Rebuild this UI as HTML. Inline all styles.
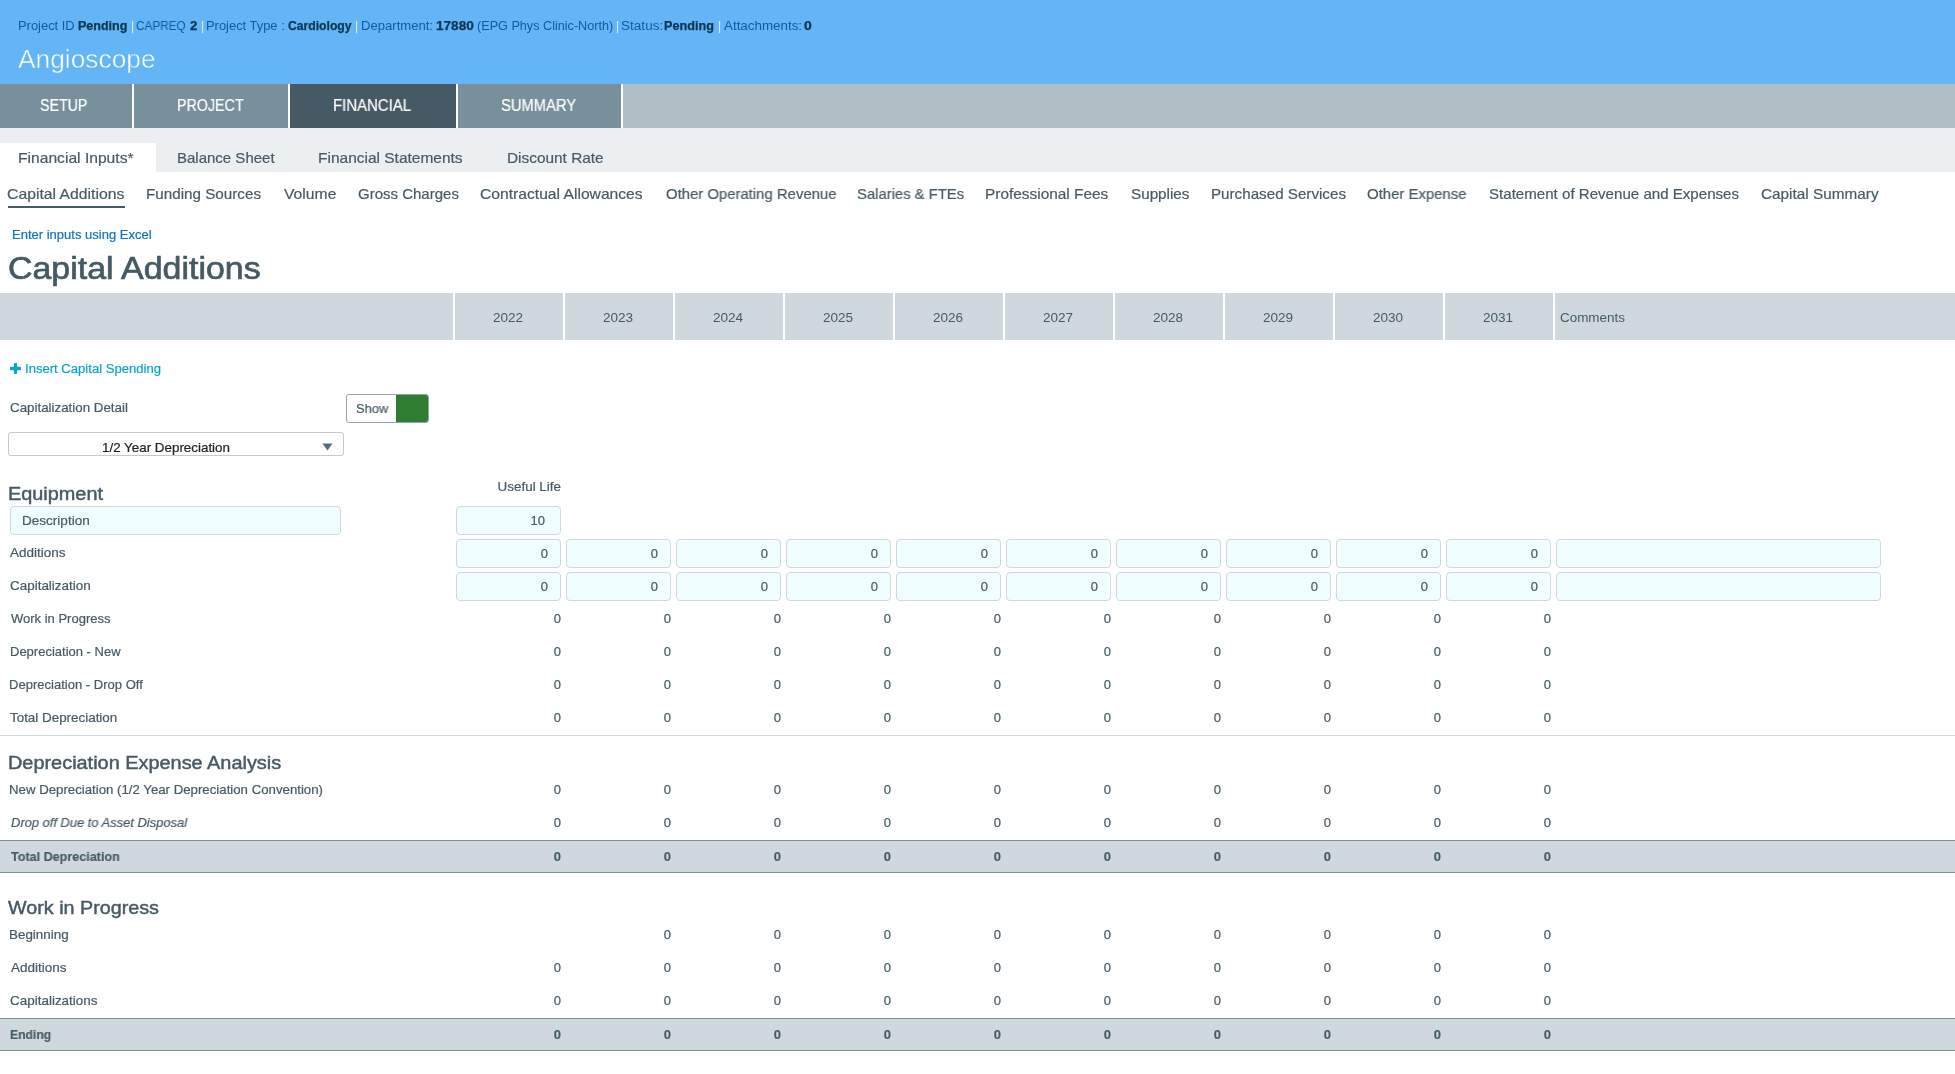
<!DOCTYPE html>
<html><head><meta charset="utf-8"><style>
html,body{margin:0;padding:0;background:#fff;width:1955px;height:1074px;overflow:hidden;position:relative}
body{font-family:"Liberation Sans",sans-serif}
.a{position:absolute}
.t{position:absolute;white-space:nowrap;will-change:transform;-webkit-text-stroke:0.2px currentColor}
.n{color:#0D5CA6}
.p{color:#E3F2FD}
b{color:#0B3654}
</style></head><body>
<div class="a" style="left:0px;top:0px;width:1955px;height:84px;background:#64B5F6"></div>
<div class="t" id="inf0" style="left:18.22px;top:19.54px;font-size:12px;line-height:12px;transform:scaleX(1.0758);transform-origin:0 0;color:#0D5CA6;-webkit-text-stroke:0;">Project ID</div>
<div class="t" id="inf1" style="left:78.15px;top:19.54px;font-size:12px;line-height:12px;transform:scaleX(1.0433);transform-origin:0 0;color:#0B3654;font-weight:bold;-webkit-text-stroke:0.25px currentColor;">Pending</div>
<div class="t" id="inf2" style="left:130.50px;top:19.54px;font-size:12px;line-height:12px;transform-origin:0 0;color:#E3F2FD;-webkit-text-stroke:0;">|</div>
<div class="t" id="inf3" style="left:136.00px;top:19.54px;font-size:12px;line-height:12px;transform:scaleX(0.9802);transform-origin:0 0;color:#0D5CA6;-webkit-text-stroke:0;">CAPREQ</div>
<div class="t" id="inf4" style="left:190.19px;top:19.54px;font-size:12px;line-height:12px;transform:scaleX(1.1024);transform-origin:0 0;color:#0B3654;font-weight:bold;-webkit-text-stroke:0.25px currentColor;">2</div>
<div class="t" id="inf5" style="left:200.80px;top:19.54px;font-size:12px;line-height:12px;transform-origin:0 0;color:#E3F2FD;-webkit-text-stroke:0;">|</div>
<div class="t" id="inf6" style="left:206.36px;top:19.54px;font-size:12px;line-height:12px;transform:scaleX(1.0762);transform-origin:0 0;color:#0D5CA6;-webkit-text-stroke:0;">Project Type :</div>
<div class="t" id="inf7" style="left:287.80px;top:19.54px;font-size:12px;line-height:12px;transform:scaleX(1.0145);transform-origin:0 0;color:#0B3654;font-weight:bold;-webkit-text-stroke:0.25px currentColor;">Cardiology</div>
<div class="t" id="inf8" style="left:355.00px;top:19.54px;font-size:12px;line-height:12px;transform-origin:0 0;color:#E3F2FD;-webkit-text-stroke:0;">|</div>
<div class="t" id="inf9" style="left:360.90px;top:19.54px;font-size:12px;line-height:12px;transform:scaleX(1.0903);transform-origin:0 0;color:#0D5CA6;-webkit-text-stroke:0;">Department:</div>
<div class="t" id="inf10" style="left:435.95px;top:19.54px;font-size:12px;line-height:12px;transform:scaleX(1.1329);transform-origin:0 0;color:#0B3654;font-weight:bold;-webkit-text-stroke:0.25px currentColor;">17880</div>
<div class="t" id="inf11" style="left:476.57px;top:19.54px;font-size:12px;line-height:12px;transform:scaleX(1.0531);transform-origin:0 0;color:#0D5CA6;-webkit-text-stroke:0;">(EPG Phys Clinic-North)</div>
<div class="t" id="inf12" style="left:616.10px;top:19.54px;font-size:12px;line-height:12px;transform-origin:0 0;color:#E3F2FD;-webkit-text-stroke:0;">|</div>
<div class="t" id="inf13" style="left:620.67px;top:19.54px;font-size:12px;line-height:12px;transform:scaleX(1.1304);transform-origin:0 0;color:#0D5CA6;-webkit-text-stroke:0;">Status:</div>
<div class="t" id="inf14" style="left:664.42px;top:19.54px;font-size:12px;line-height:12px;transform:scaleX(1.0532);transform-origin:0 0;color:#0B3654;font-weight:bold;-webkit-text-stroke:0.25px currentColor;">Pending</div>
<div class="t" id="inf15" style="left:717.70px;top:19.54px;font-size:12px;line-height:12px;transform-origin:0 0;color:#E3F2FD;-webkit-text-stroke:0;">|</div>
<div class="t" id="inf16" style="left:723.65px;top:19.54px;font-size:12px;line-height:12px;transform:scaleX(1.1151);transform-origin:0 0;color:#0D5CA6;-webkit-text-stroke:0;">Attachments:</div>
<div class="t" id="inf17" style="left:803.95px;top:19.54px;font-size:12px;line-height:12px;transform:scaleX(1.1584);transform-origin:0 0;color:#0B3654;font-weight:bold;-webkit-text-stroke:0.25px currentColor;">0</div>
<div class="t" id="angio" style="left:17.95px;top:46.64px;font-size:25px;line-height:25px;transform:scaleX(1.0534);transform-origin:0 0;color:#fff;-webkit-text-stroke:0.45px #64B5F6">Angioscope</div>
<div class="a" style="left:0px;top:84px;width:132px;height:44px;background:#78909C"></div>
<div class="a" style="left:134px;top:84px;width:154px;height:44px;background:#78909C"></div>
<div class="a" style="left:290px;top:84px;width:166px;height:44px;background:#455A64"></div>
<div class="a" style="left:458px;top:84px;width:163px;height:44px;background:#78909C"></div>
<div class="a" style="left:623px;top:84px;width:1332px;height:44px;background:#B0BEC5"></div>
<div class="t" id="t_setup" style="left:40.21px;top:98.21px;font-size:15.7px;line-height:15.7px;transform:scaleX(0.9073);transform-origin:0 0;color:#fff">SETUP</div>
<div class="t" id="t_proj" style="left:177.39px;top:98.21px;font-size:15.7px;line-height:15.7px;transform:scaleX(0.9104);transform-origin:0 0;color:#fff">PROJECT</div>
<div class="t" id="t_fin" style="left:333.48px;top:98.21px;font-size:15.7px;line-height:15.7px;transform:scaleX(0.9525);transform-origin:0 0;color:#fff">FINANCIAL</div>
<div class="t" id="t_sum" style="left:501.06px;top:98.21px;font-size:15.7px;line-height:15.7px;transform:scaleX(0.9393);transform-origin:0 0;color:#fff">SUMMARY</div>
<div class="a" style="left:0px;top:128px;width:1955px;height:44px;background:#ECEFF1"></div>
<div class="a" style="left:0px;top:143px;width:156px;height:29px;background:#fff"></div>
<div class="t" id="s_fi" style="left:18.01px;top:150.20px;font-size:15px;line-height:15px;transform:scaleX(1.0418);transform-origin:0 0;color:#455A64">Financial Inputs*</div>
<div class="t" id="s_bs" style="left:177.03px;top:150.20px;font-size:15px;line-height:15px;transform:scaleX(0.9983);transform-origin:0 0;color:#455A64">Balance Sheet</div>
<div class="t" id="s_fs" style="left:318.48px;top:150.20px;font-size:15px;line-height:15px;transform:scaleX(1.0324);transform-origin:0 0;color:#455A64">Financial Statements</div>
<div class="t" id="s_dr" style="left:507.06px;top:150.20px;font-size:15px;line-height:15px;transform:scaleX(1.0256);transform-origin:0 0;color:#455A64">Discount Rate</div>
<div class="t" id="n0" style="left:7.31px;top:185.90px;font-size:15px;line-height:15px;transform:scaleX(1.0502);transform-origin:0 0;color:#455A64">Capital Additions</div>
<div class="t" id="n1" style="left:145.99px;top:185.90px;font-size:15px;line-height:15px;transform:scaleX(1.0143);transform-origin:0 0;color:#455A64">Funding Sources</div>
<div class="t" id="n2" style="left:283.60px;top:185.90px;font-size:15px;line-height:15px;transform:scaleX(1.0473);transform-origin:0 0;color:#455A64">Volume</div>
<div class="t" id="n3" style="left:358.20px;top:185.90px;font-size:15px;line-height:15px;transform:scaleX(1.0004);transform-origin:0 0;color:#455A64">Gross Charges</div>
<div class="t" id="n4" style="left:480.07px;top:185.90px;font-size:15px;line-height:15px;transform:scaleX(1.0431);transform-origin:0 0;color:#455A64">Contractual Allowances</div>
<div class="t" id="n5" style="left:665.90px;top:185.90px;font-size:15px;line-height:15px;transform:scaleX(0.9923);transform-origin:0 0;color:#455A64">Other Operating Revenue</div>
<div class="t" id="n6" style="left:857.38px;top:185.90px;font-size:15px;line-height:15px;transform:scaleX(0.9890);transform-origin:0 0;color:#455A64">Salaries &amp; FTEs</div>
<div class="t" id="n7" style="left:985.13px;top:185.90px;font-size:15px;line-height:15px;transform:scaleX(1.0272);transform-origin:0 0;color:#455A64">Professional Fees</div>
<div class="t" id="n8" style="left:1130.76px;top:185.90px;font-size:15px;line-height:15px;transform:scaleX(1.0159);transform-origin:0 0;color:#455A64">Supplies</div>
<div class="t" id="n9" style="left:1210.68px;top:185.90px;font-size:15px;line-height:15px;transform:scaleX(1.0120);transform-origin:0 0;color:#455A64">Purchased Services</div>
<div class="t" id="n10" style="left:1367.46px;top:185.90px;font-size:15px;line-height:15px;transform:scaleX(0.9941);transform-origin:0 0;color:#455A64">Other Expense</div>
<div class="t" id="n11" style="left:1488.94px;top:185.90px;font-size:15px;line-height:15px;transform:scaleX(1.0062);transform-origin:0 0;color:#455A64">Statement of Revenue and Expenses</div>
<div class="t" id="n12" style="left:1760.57px;top:185.90px;font-size:15px;line-height:15px;transform:scaleX(1.0218);transform-origin:0 0;color:#455A64">Capital Summary</div>
<div class="a" style="left:8px;top:206px;width:117px;height:2px;background:#455A64"></div>
<div class="t" id="excel" style="left:12.07px;top:227.90px;font-size:13px;line-height:13px;transform:scaleX(1.0011);transform-origin:0 0;color:#0B74BF">Enter inputs using Excel</div>
<div class="t" id="h1" style="left:8.45px;top:251.91px;font-size:32px;line-height:32px;transform:scaleX(1.0598);transform-origin:0 0;color:#455A64;-webkit-text-stroke:0.7px #455A64">Capital Additions</div>
<div class="a" style="left:0px;top:293px;width:453px;height:47px;background:#CFD8DC"></div>
<div class="a" style="left:455px;top:293px;width:108px;height:47px;background:#CFD8DC"></div>
<div class="t" id="y0" style="left:208.22px;width:600px;text-align:center;top:311.10px;font-size:13px;line-height:13px;transform:scaleX(1.0433);transform-origin:50% 0;color:#455A64;-webkit-text-stroke:0">2022</div>
<div class="a" style="left:565px;top:293px;width:108px;height:47px;background:#CFD8DC"></div>
<div class="t" id="y1" style="left:318.22px;width:600px;text-align:center;top:311.10px;font-size:13px;line-height:13px;transform:scaleX(1.0433);transform-origin:50% 0;color:#455A64;-webkit-text-stroke:0">2023</div>
<div class="a" style="left:675px;top:293px;width:108px;height:47px;background:#CFD8DC"></div>
<div class="t" id="y2" style="left:428.22px;width:600px;text-align:center;top:311.10px;font-size:13px;line-height:13px;transform:scaleX(1.0433);transform-origin:50% 0;color:#455A64;-webkit-text-stroke:0">2024</div>
<div class="a" style="left:785px;top:293px;width:108px;height:47px;background:#CFD8DC"></div>
<div class="t" id="y3" style="left:538.22px;width:600px;text-align:center;top:311.10px;font-size:13px;line-height:13px;transform:scaleX(1.0433);transform-origin:50% 0;color:#455A64;-webkit-text-stroke:0">2025</div>
<div class="a" style="left:895px;top:293px;width:108px;height:47px;background:#CFD8DC"></div>
<div class="t" id="y4" style="left:648.22px;width:600px;text-align:center;top:311.10px;font-size:13px;line-height:13px;transform:scaleX(1.0433);transform-origin:50% 0;color:#455A64;-webkit-text-stroke:0">2026</div>
<div class="a" style="left:1005px;top:293px;width:108px;height:47px;background:#CFD8DC"></div>
<div class="t" id="y5" style="left:758.22px;width:600px;text-align:center;top:311.10px;font-size:13px;line-height:13px;transform:scaleX(1.0433);transform-origin:50% 0;color:#455A64;-webkit-text-stroke:0">2027</div>
<div class="a" style="left:1115px;top:293px;width:108px;height:47px;background:#CFD8DC"></div>
<div class="t" id="y6" style="left:868.22px;width:600px;text-align:center;top:311.10px;font-size:13px;line-height:13px;transform:scaleX(1.0433);transform-origin:50% 0;color:#455A64;-webkit-text-stroke:0">2028</div>
<div class="a" style="left:1225px;top:293px;width:108px;height:47px;background:#CFD8DC"></div>
<div class="t" id="y7" style="left:978.22px;width:600px;text-align:center;top:311.10px;font-size:13px;line-height:13px;transform:scaleX(1.0433);transform-origin:50% 0;color:#455A64;-webkit-text-stroke:0">2029</div>
<div class="a" style="left:1335px;top:293px;width:108px;height:47px;background:#CFD8DC"></div>
<div class="t" id="y8" style="left:1088.22px;width:600px;text-align:center;top:311.10px;font-size:13px;line-height:13px;transform:scaleX(1.0433);transform-origin:50% 0;color:#455A64;-webkit-text-stroke:0">2030</div>
<div class="a" style="left:1445px;top:293px;width:108px;height:47px;background:#CFD8DC"></div>
<div class="t" id="y9" style="left:1198.22px;width:600px;text-align:center;top:311.10px;font-size:13px;line-height:13px;transform:scaleX(1.0433);transform-origin:50% 0;color:#455A64;-webkit-text-stroke:0">2031</div>
<div class="a" style="left:1555px;top:293px;width:400px;height:47px;background:#CFD8DC"></div>
<div class="t" id="comments" style="left:1560.07px;top:311.10px;font-size:13px;line-height:13px;transform:scaleX(1.0338);transform-origin:0 0;color:#455A64;-webkit-text-stroke:0">Comments</div>
<svg class="a" style="left:9.9px;top:363.3px" width="11" height="11" viewBox="0 0 11 11"><rect x="0" y="3.7" width="11" height="3.5" rx="0.9" fill="#0AA5C8"/><rect x="3.95" y="0" width="3.1" height="11" rx="0.9" fill="#0AA5C8"/></svg>
<div class="t" id="insert" style="left:25.44px;top:361.80px;font-size:13px;line-height:13px;transform:scaleX(1.0062);transform-origin:0 0;color:#0AA5C8">Insert Capital Spending</div>
<div class="t" id="capdet" style="left:10.16px;top:400.80px;font-size:13px;line-height:13px;transform:scaleX(1.0259);transform-origin:0 0;color:#455A64">Capitalization Detail</div>
<div class="a" style="left:346px;top:394px;width:83px;height:29px;border:1px solid #90A4AE;border-radius:3px;box-sizing:border-box;background:#fff"></div>
<div class="a" style="left:396px;top:395px;width:32px;height:27px;background:#2E7D32;border-radius:0 2px 2px 0"></div>
<div class="t" id="show" style="left:356.05px;top:401.90px;font-size:13px;line-height:13px;transform:scaleX(0.9860);transform-origin:0 0;color:#455A64">Show</div>
<div class="a" style="left:8px;top:432px;width:336px;height:24px;border:1px solid #C8C8C8;border-radius:3px;box-sizing:border-box;background:#fff"></div>
<div class="t" id="sel" style="left:101.81px;top:441.00px;font-size:13px;line-height:13px;transform:scaleX(1.0295);transform-origin:0 0;color:#222">1/2 Year Depreciation</div>
<svg class="a" style="left:322px;top:443px" width="11" height="8" viewBox="0 0 11 8"><path d="M0.5 0.5h10L5.5 7.5z" fill="#546E7A"/></svg>
<div class="t" id="equip" style="left:7.55px;top:484.66px;font-size:18px;line-height:18px;transform:scaleX(1.1039);transform-origin:0 0;color:#455A64;-webkit-text-stroke:0.45px #455A64">Equipment</div>
<div class="t" id="useful" style="left:260.89px;width:300px;text-align:right;top:479.90px;font-size:13px;line-height:13px;transform:scaleX(1.0320);transform-origin:100% 0;color:#455A64">Useful Life</div>
<div class="a" style="left:10px;top:506px;width:331px;height:29px;border:1px solid #CFD8DC;border-radius:4px;box-sizing:border-box;background:#F1FEFF"></div>
<div class="t" id="desc" style="left:22.29px;top:514.00px;font-size:13px;line-height:13px;transform:scaleX(1.0412);transform-origin:0 0;color:#455A64">Description</div>
<div class="a" style="left:456px;top:506px;width:105px;height:29px;border:1px solid #CFD8DC;border-radius:4px;box-sizing:border-box;background:#F1FEFF"></div>
<div class="t" id="ul10" style="left:244.70px;width:300px;text-align:right;top:514.00px;font-size:13px;line-height:13px;transform-origin:100% 0;color:#455A64">10</div>
<div class="t" id="lab_e0" style="left:10.24px;top:546.00px;font-size:13px;line-height:13px;transform:scaleX(1.0377);transform-origin:0 0;color:#455A64">Additions</div>
<div class="a" style="left:456px;top:539px;width:105px;height:29px;border:1px solid #CFD8DC;border-radius:4px;box-sizing:border-box;background:#F1FEFF"></div>
<div class="t" id="in0_0" style="left:248.00px;width:300px;text-align:right;top:547.00px;font-size:13px;line-height:13px;transform-origin:100% 0;color:#455A64">0</div>
<div class="a" style="left:566px;top:539px;width:105px;height:29px;border:1px solid #CFD8DC;border-radius:4px;box-sizing:border-box;background:#F1FEFF"></div>
<div class="t" id="in0_1" style="left:358.00px;width:300px;text-align:right;top:547.00px;font-size:13px;line-height:13px;transform-origin:100% 0;color:#455A64">0</div>
<div class="a" style="left:676px;top:539px;width:105px;height:29px;border:1px solid #CFD8DC;border-radius:4px;box-sizing:border-box;background:#F1FEFF"></div>
<div class="t" id="in0_2" style="left:468.00px;width:300px;text-align:right;top:547.00px;font-size:13px;line-height:13px;transform-origin:100% 0;color:#455A64">0</div>
<div class="a" style="left:786px;top:539px;width:105px;height:29px;border:1px solid #CFD8DC;border-radius:4px;box-sizing:border-box;background:#F1FEFF"></div>
<div class="t" id="in0_3" style="left:578.00px;width:300px;text-align:right;top:547.00px;font-size:13px;line-height:13px;transform-origin:100% 0;color:#455A64">0</div>
<div class="a" style="left:896px;top:539px;width:105px;height:29px;border:1px solid #CFD8DC;border-radius:4px;box-sizing:border-box;background:#F1FEFF"></div>
<div class="t" id="in0_4" style="left:688.00px;width:300px;text-align:right;top:547.00px;font-size:13px;line-height:13px;transform-origin:100% 0;color:#455A64">0</div>
<div class="a" style="left:1006px;top:539px;width:105px;height:29px;border:1px solid #CFD8DC;border-radius:4px;box-sizing:border-box;background:#F1FEFF"></div>
<div class="t" id="in0_5" style="left:798.00px;width:300px;text-align:right;top:547.00px;font-size:13px;line-height:13px;transform-origin:100% 0;color:#455A64">0</div>
<div class="a" style="left:1116px;top:539px;width:105px;height:29px;border:1px solid #CFD8DC;border-radius:4px;box-sizing:border-box;background:#F1FEFF"></div>
<div class="t" id="in0_6" style="left:908.00px;width:300px;text-align:right;top:547.00px;font-size:13px;line-height:13px;transform-origin:100% 0;color:#455A64">0</div>
<div class="a" style="left:1226px;top:539px;width:105px;height:29px;border:1px solid #CFD8DC;border-radius:4px;box-sizing:border-box;background:#F1FEFF"></div>
<div class="t" id="in0_7" style="left:1018.00px;width:300px;text-align:right;top:547.00px;font-size:13px;line-height:13px;transform-origin:100% 0;color:#455A64">0</div>
<div class="a" style="left:1336px;top:539px;width:105px;height:29px;border:1px solid #CFD8DC;border-radius:4px;box-sizing:border-box;background:#F1FEFF"></div>
<div class="t" id="in0_8" style="left:1128.00px;width:300px;text-align:right;top:547.00px;font-size:13px;line-height:13px;transform-origin:100% 0;color:#455A64">0</div>
<div class="a" style="left:1446px;top:539px;width:105px;height:29px;border:1px solid #CFD8DC;border-radius:4px;box-sizing:border-box;background:#F1FEFF"></div>
<div class="t" id="in0_9" style="left:1238.00px;width:300px;text-align:right;top:547.00px;font-size:13px;line-height:13px;transform-origin:100% 0;color:#455A64">0</div>
<div class="a" style="left:1556px;top:539px;width:325px;height:29px;border:1px solid #CFD8DC;border-radius:4px;box-sizing:border-box;background:#F1FEFF"></div>
<div class="t" id="lab_e1" style="left:9.87px;top:578.80px;font-size:13px;line-height:13px;transform:scaleX(1.0340);transform-origin:0 0;color:#455A64">Capitalization</div>
<div class="a" style="left:456px;top:572px;width:105px;height:29px;border:1px solid #CFD8DC;border-radius:4px;box-sizing:border-box;background:#F1FEFF"></div>
<div class="t" id="in1_0" style="left:248.00px;width:300px;text-align:right;top:580.00px;font-size:13px;line-height:13px;transform-origin:100% 0;color:#455A64">0</div>
<div class="a" style="left:566px;top:572px;width:105px;height:29px;border:1px solid #CFD8DC;border-radius:4px;box-sizing:border-box;background:#F1FEFF"></div>
<div class="t" id="in1_1" style="left:358.00px;width:300px;text-align:right;top:580.00px;font-size:13px;line-height:13px;transform-origin:100% 0;color:#455A64">0</div>
<div class="a" style="left:676px;top:572px;width:105px;height:29px;border:1px solid #CFD8DC;border-radius:4px;box-sizing:border-box;background:#F1FEFF"></div>
<div class="t" id="in1_2" style="left:468.00px;width:300px;text-align:right;top:580.00px;font-size:13px;line-height:13px;transform-origin:100% 0;color:#455A64">0</div>
<div class="a" style="left:786px;top:572px;width:105px;height:29px;border:1px solid #CFD8DC;border-radius:4px;box-sizing:border-box;background:#F1FEFF"></div>
<div class="t" id="in1_3" style="left:578.00px;width:300px;text-align:right;top:580.00px;font-size:13px;line-height:13px;transform-origin:100% 0;color:#455A64">0</div>
<div class="a" style="left:896px;top:572px;width:105px;height:29px;border:1px solid #CFD8DC;border-radius:4px;box-sizing:border-box;background:#F1FEFF"></div>
<div class="t" id="in1_4" style="left:688.00px;width:300px;text-align:right;top:580.00px;font-size:13px;line-height:13px;transform-origin:100% 0;color:#455A64">0</div>
<div class="a" style="left:1006px;top:572px;width:105px;height:29px;border:1px solid #CFD8DC;border-radius:4px;box-sizing:border-box;background:#F1FEFF"></div>
<div class="t" id="in1_5" style="left:798.00px;width:300px;text-align:right;top:580.00px;font-size:13px;line-height:13px;transform-origin:100% 0;color:#455A64">0</div>
<div class="a" style="left:1116px;top:572px;width:105px;height:29px;border:1px solid #CFD8DC;border-radius:4px;box-sizing:border-box;background:#F1FEFF"></div>
<div class="t" id="in1_6" style="left:908.00px;width:300px;text-align:right;top:580.00px;font-size:13px;line-height:13px;transform-origin:100% 0;color:#455A64">0</div>
<div class="a" style="left:1226px;top:572px;width:105px;height:29px;border:1px solid #CFD8DC;border-radius:4px;box-sizing:border-box;background:#F1FEFF"></div>
<div class="t" id="in1_7" style="left:1018.00px;width:300px;text-align:right;top:580.00px;font-size:13px;line-height:13px;transform-origin:100% 0;color:#455A64">0</div>
<div class="a" style="left:1336px;top:572px;width:105px;height:29px;border:1px solid #CFD8DC;border-radius:4px;box-sizing:border-box;background:#F1FEFF"></div>
<div class="t" id="in1_8" style="left:1128.00px;width:300px;text-align:right;top:580.00px;font-size:13px;line-height:13px;transform-origin:100% 0;color:#455A64">0</div>
<div class="a" style="left:1446px;top:572px;width:105px;height:29px;border:1px solid #CFD8DC;border-radius:4px;box-sizing:border-box;background:#F1FEFF"></div>
<div class="t" id="in1_9" style="left:1238.00px;width:300px;text-align:right;top:580.00px;font-size:13px;line-height:13px;transform-origin:100% 0;color:#455A64">0</div>
<div class="a" style="left:1556px;top:572px;width:325px;height:29px;border:1px solid #CFD8DC;border-radius:4px;box-sizing:border-box;background:#F1FEFF"></div>
<div class="t" id="wip" style="left:10.60px;top:612.20px;font-size:13px;line-height:13px;transform-origin:0 0;color:#455A64;">Work in Progress</div>
<div class="t" id="wip_v0" style="left:261.00px;width:300px;text-align:right;top:612.20px;font-size:13px;line-height:13px;transform-origin:100% 0;color:#455A64;">0</div>
<div class="t" id="wip_v1" style="left:371.00px;width:300px;text-align:right;top:612.20px;font-size:13px;line-height:13px;transform-origin:100% 0;color:#455A64;">0</div>
<div class="t" id="wip_v2" style="left:481.00px;width:300px;text-align:right;top:612.20px;font-size:13px;line-height:13px;transform-origin:100% 0;color:#455A64;">0</div>
<div class="t" id="wip_v3" style="left:591.00px;width:300px;text-align:right;top:612.20px;font-size:13px;line-height:13px;transform-origin:100% 0;color:#455A64;">0</div>
<div class="t" id="wip_v4" style="left:701.00px;width:300px;text-align:right;top:612.20px;font-size:13px;line-height:13px;transform-origin:100% 0;color:#455A64;">0</div>
<div class="t" id="wip_v5" style="left:811.00px;width:300px;text-align:right;top:612.20px;font-size:13px;line-height:13px;transform-origin:100% 0;color:#455A64;">0</div>
<div class="t" id="wip_v6" style="left:921.00px;width:300px;text-align:right;top:612.20px;font-size:13px;line-height:13px;transform-origin:100% 0;color:#455A64;">0</div>
<div class="t" id="wip_v7" style="left:1031.00px;width:300px;text-align:right;top:612.20px;font-size:13px;line-height:13px;transform-origin:100% 0;color:#455A64;">0</div>
<div class="t" id="wip_v8" style="left:1141.00px;width:300px;text-align:right;top:612.20px;font-size:13px;line-height:13px;transform-origin:100% 0;color:#455A64;">0</div>
<div class="t" id="wip_v9" style="left:1251.00px;width:300px;text-align:right;top:612.20px;font-size:13px;line-height:13px;transform-origin:100% 0;color:#455A64;">0</div>
<div class="t" id="dn" style="left:9.94px;top:645.20px;font-size:13px;line-height:13px;transform:scaleX(0.9992);transform-origin:0 0;color:#455A64;">Depreciation - New</div>
<div class="t" id="dn_v0" style="left:261.00px;width:300px;text-align:right;top:645.20px;font-size:13px;line-height:13px;transform-origin:100% 0;color:#455A64;">0</div>
<div class="t" id="dn_v1" style="left:371.00px;width:300px;text-align:right;top:645.20px;font-size:13px;line-height:13px;transform-origin:100% 0;color:#455A64;">0</div>
<div class="t" id="dn_v2" style="left:481.00px;width:300px;text-align:right;top:645.20px;font-size:13px;line-height:13px;transform-origin:100% 0;color:#455A64;">0</div>
<div class="t" id="dn_v3" style="left:591.00px;width:300px;text-align:right;top:645.20px;font-size:13px;line-height:13px;transform-origin:100% 0;color:#455A64;">0</div>
<div class="t" id="dn_v4" style="left:701.00px;width:300px;text-align:right;top:645.20px;font-size:13px;line-height:13px;transform-origin:100% 0;color:#455A64;">0</div>
<div class="t" id="dn_v5" style="left:811.00px;width:300px;text-align:right;top:645.20px;font-size:13px;line-height:13px;transform-origin:100% 0;color:#455A64;">0</div>
<div class="t" id="dn_v6" style="left:921.00px;width:300px;text-align:right;top:645.20px;font-size:13px;line-height:13px;transform-origin:100% 0;color:#455A64;">0</div>
<div class="t" id="dn_v7" style="left:1031.00px;width:300px;text-align:right;top:645.20px;font-size:13px;line-height:13px;transform-origin:100% 0;color:#455A64;">0</div>
<div class="t" id="dn_v8" style="left:1141.00px;width:300px;text-align:right;top:645.20px;font-size:13px;line-height:13px;transform-origin:100% 0;color:#455A64;">0</div>
<div class="t" id="dn_v9" style="left:1251.00px;width:300px;text-align:right;top:645.20px;font-size:13px;line-height:13px;transform-origin:100% 0;color:#455A64;">0</div>
<div class="t" id="dd" style="left:9.17px;top:678.20px;font-size:13px;line-height:13px;transform:scaleX(1.0028);transform-origin:0 0;color:#455A64;">Depreciation - Drop Off</div>
<div class="t" id="dd_v0" style="left:261.00px;width:300px;text-align:right;top:678.20px;font-size:13px;line-height:13px;transform-origin:100% 0;color:#455A64;">0</div>
<div class="t" id="dd_v1" style="left:371.00px;width:300px;text-align:right;top:678.20px;font-size:13px;line-height:13px;transform-origin:100% 0;color:#455A64;">0</div>
<div class="t" id="dd_v2" style="left:481.00px;width:300px;text-align:right;top:678.20px;font-size:13px;line-height:13px;transform-origin:100% 0;color:#455A64;">0</div>
<div class="t" id="dd_v3" style="left:591.00px;width:300px;text-align:right;top:678.20px;font-size:13px;line-height:13px;transform-origin:100% 0;color:#455A64;">0</div>
<div class="t" id="dd_v4" style="left:701.00px;width:300px;text-align:right;top:678.20px;font-size:13px;line-height:13px;transform-origin:100% 0;color:#455A64;">0</div>
<div class="t" id="dd_v5" style="left:811.00px;width:300px;text-align:right;top:678.20px;font-size:13px;line-height:13px;transform-origin:100% 0;color:#455A64;">0</div>
<div class="t" id="dd_v6" style="left:921.00px;width:300px;text-align:right;top:678.20px;font-size:13px;line-height:13px;transform-origin:100% 0;color:#455A64;">0</div>
<div class="t" id="dd_v7" style="left:1031.00px;width:300px;text-align:right;top:678.20px;font-size:13px;line-height:13px;transform-origin:100% 0;color:#455A64;">0</div>
<div class="t" id="dd_v8" style="left:1141.00px;width:300px;text-align:right;top:678.20px;font-size:13px;line-height:13px;transform-origin:100% 0;color:#455A64;">0</div>
<div class="t" id="dd_v9" style="left:1251.00px;width:300px;text-align:right;top:678.20px;font-size:13px;line-height:13px;transform-origin:100% 0;color:#455A64;">0</div>
<div class="t" id="td" style="left:10.29px;top:711.20px;font-size:13px;line-height:13px;transform:scaleX(1.0305);transform-origin:0 0;color:#455A64;">Total Depreciation</div>
<div class="t" id="td_v0" style="left:261.00px;width:300px;text-align:right;top:711.20px;font-size:13px;line-height:13px;transform-origin:100% 0;color:#455A64;">0</div>
<div class="t" id="td_v1" style="left:371.00px;width:300px;text-align:right;top:711.20px;font-size:13px;line-height:13px;transform-origin:100% 0;color:#455A64;">0</div>
<div class="t" id="td_v2" style="left:481.00px;width:300px;text-align:right;top:711.20px;font-size:13px;line-height:13px;transform-origin:100% 0;color:#455A64;">0</div>
<div class="t" id="td_v3" style="left:591.00px;width:300px;text-align:right;top:711.20px;font-size:13px;line-height:13px;transform-origin:100% 0;color:#455A64;">0</div>
<div class="t" id="td_v4" style="left:701.00px;width:300px;text-align:right;top:711.20px;font-size:13px;line-height:13px;transform-origin:100% 0;color:#455A64;">0</div>
<div class="t" id="td_v5" style="left:811.00px;width:300px;text-align:right;top:711.20px;font-size:13px;line-height:13px;transform-origin:100% 0;color:#455A64;">0</div>
<div class="t" id="td_v6" style="left:921.00px;width:300px;text-align:right;top:711.20px;font-size:13px;line-height:13px;transform-origin:100% 0;color:#455A64;">0</div>
<div class="t" id="td_v7" style="left:1031.00px;width:300px;text-align:right;top:711.20px;font-size:13px;line-height:13px;transform-origin:100% 0;color:#455A64;">0</div>
<div class="t" id="td_v8" style="left:1141.00px;width:300px;text-align:right;top:711.20px;font-size:13px;line-height:13px;transform-origin:100% 0;color:#455A64;">0</div>
<div class="t" id="td_v9" style="left:1251.00px;width:300px;text-align:right;top:711.20px;font-size:13px;line-height:13px;transform-origin:100% 0;color:#455A64;">0</div>
<div class="a" style="left:0px;top:735px;width:1955px;height:1px;background:#CFD8DC"></div>
<div class="t" id="dea" style="left:7.89px;top:753.56px;font-size:18px;line-height:18px;transform:scaleX(1.1053);transform-origin:0 0;color:#455A64;-webkit-text-stroke:0.45px #455A64">Depreciation Expense Analysis</div>
<div class="t" id="nd" style="left:9.48px;top:783.00px;font-size:13px;line-height:13px;transform:scaleX(1.0175);transform-origin:0 0;color:#455A64;">New Depreciation (1/2 Year Depreciation Convention)</div>
<div class="t" id="nd_v0" style="left:261.00px;width:300px;text-align:right;top:783.00px;font-size:13px;line-height:13px;transform-origin:100% 0;color:#455A64;">0</div>
<div class="t" id="nd_v1" style="left:371.00px;width:300px;text-align:right;top:783.00px;font-size:13px;line-height:13px;transform-origin:100% 0;color:#455A64;">0</div>
<div class="t" id="nd_v2" style="left:481.00px;width:300px;text-align:right;top:783.00px;font-size:13px;line-height:13px;transform-origin:100% 0;color:#455A64;">0</div>
<div class="t" id="nd_v3" style="left:591.00px;width:300px;text-align:right;top:783.00px;font-size:13px;line-height:13px;transform-origin:100% 0;color:#455A64;">0</div>
<div class="t" id="nd_v4" style="left:701.00px;width:300px;text-align:right;top:783.00px;font-size:13px;line-height:13px;transform-origin:100% 0;color:#455A64;">0</div>
<div class="t" id="nd_v5" style="left:811.00px;width:300px;text-align:right;top:783.00px;font-size:13px;line-height:13px;transform-origin:100% 0;color:#455A64;">0</div>
<div class="t" id="nd_v6" style="left:921.00px;width:300px;text-align:right;top:783.00px;font-size:13px;line-height:13px;transform-origin:100% 0;color:#455A64;">0</div>
<div class="t" id="nd_v7" style="left:1031.00px;width:300px;text-align:right;top:783.00px;font-size:13px;line-height:13px;transform-origin:100% 0;color:#455A64;">0</div>
<div class="t" id="nd_v8" style="left:1141.00px;width:300px;text-align:right;top:783.00px;font-size:13px;line-height:13px;transform-origin:100% 0;color:#455A64;">0</div>
<div class="t" id="nd_v9" style="left:1251.00px;width:300px;text-align:right;top:783.00px;font-size:13px;line-height:13px;transform-origin:100% 0;color:#455A64;">0</div>
<div class="t" id="do" style="left:10.96px;top:815.80px;font-size:13px;line-height:13px;transform:scaleX(0.9924);transform-origin:0 0;color:#455A64;font-style:italic;">Drop off Due to Asset Disposal</div>
<div class="t" id="do_v0" style="left:261.00px;width:300px;text-align:right;top:815.80px;font-size:13px;line-height:13px;transform-origin:100% 0;color:#455A64;">0</div>
<div class="t" id="do_v1" style="left:371.00px;width:300px;text-align:right;top:815.80px;font-size:13px;line-height:13px;transform-origin:100% 0;color:#455A64;">0</div>
<div class="t" id="do_v2" style="left:481.00px;width:300px;text-align:right;top:815.80px;font-size:13px;line-height:13px;transform-origin:100% 0;color:#455A64;">0</div>
<div class="t" id="do_v3" style="left:591.00px;width:300px;text-align:right;top:815.80px;font-size:13px;line-height:13px;transform-origin:100% 0;color:#455A64;">0</div>
<div class="t" id="do_v4" style="left:701.00px;width:300px;text-align:right;top:815.80px;font-size:13px;line-height:13px;transform-origin:100% 0;color:#455A64;">0</div>
<div class="t" id="do_v5" style="left:811.00px;width:300px;text-align:right;top:815.80px;font-size:13px;line-height:13px;transform-origin:100% 0;color:#455A64;">0</div>
<div class="t" id="do_v6" style="left:921.00px;width:300px;text-align:right;top:815.80px;font-size:13px;line-height:13px;transform-origin:100% 0;color:#455A64;">0</div>
<div class="t" id="do_v7" style="left:1031.00px;width:300px;text-align:right;top:815.80px;font-size:13px;line-height:13px;transform-origin:100% 0;color:#455A64;">0</div>
<div class="t" id="do_v8" style="left:1141.00px;width:300px;text-align:right;top:815.80px;font-size:13px;line-height:13px;transform-origin:100% 0;color:#455A64;">0</div>
<div class="t" id="do_v9" style="left:1251.00px;width:300px;text-align:right;top:815.80px;font-size:13px;line-height:13px;transform-origin:100% 0;color:#455A64;">0</div>
<div class="a" style="left:0px;top:840px;width:1955px;height:33px;background:#CFD8DC;border-top:1px solid #78909C;border-bottom:1px solid #78909C;box-sizing:border-box"></div>
<div class="t" id="tot" style="left:10.60px;top:849.80px;font-size:13px;line-height:13px;transform:scaleX(0.9675);transform-origin:0 0;color:#455A64;font-weight:bold;-webkit-text-stroke:0.15px currentColor;">Total Depreciation</div>
<div class="t" id="tot_v0" style="left:261.00px;width:300px;text-align:right;top:849.80px;font-size:13px;line-height:13px;transform-origin:100% 0;color:#455A64;font-weight:bold;-webkit-text-stroke:0.15px currentColor;">0</div>
<div class="t" id="tot_v1" style="left:371.00px;width:300px;text-align:right;top:849.80px;font-size:13px;line-height:13px;transform-origin:100% 0;color:#455A64;font-weight:bold;-webkit-text-stroke:0.15px currentColor;">0</div>
<div class="t" id="tot_v2" style="left:481.00px;width:300px;text-align:right;top:849.80px;font-size:13px;line-height:13px;transform-origin:100% 0;color:#455A64;font-weight:bold;-webkit-text-stroke:0.15px currentColor;">0</div>
<div class="t" id="tot_v3" style="left:591.00px;width:300px;text-align:right;top:849.80px;font-size:13px;line-height:13px;transform-origin:100% 0;color:#455A64;font-weight:bold;-webkit-text-stroke:0.15px currentColor;">0</div>
<div class="t" id="tot_v4" style="left:701.00px;width:300px;text-align:right;top:849.80px;font-size:13px;line-height:13px;transform-origin:100% 0;color:#455A64;font-weight:bold;-webkit-text-stroke:0.15px currentColor;">0</div>
<div class="t" id="tot_v5" style="left:811.00px;width:300px;text-align:right;top:849.80px;font-size:13px;line-height:13px;transform-origin:100% 0;color:#455A64;font-weight:bold;-webkit-text-stroke:0.15px currentColor;">0</div>
<div class="t" id="tot_v6" style="left:921.00px;width:300px;text-align:right;top:849.80px;font-size:13px;line-height:13px;transform-origin:100% 0;color:#455A64;font-weight:bold;-webkit-text-stroke:0.15px currentColor;">0</div>
<div class="t" id="tot_v7" style="left:1031.00px;width:300px;text-align:right;top:849.80px;font-size:13px;line-height:13px;transform-origin:100% 0;color:#455A64;font-weight:bold;-webkit-text-stroke:0.15px currentColor;">0</div>
<div class="t" id="tot_v8" style="left:1141.00px;width:300px;text-align:right;top:849.80px;font-size:13px;line-height:13px;transform-origin:100% 0;color:#455A64;font-weight:bold;-webkit-text-stroke:0.15px currentColor;">0</div>
<div class="t" id="tot_v9" style="left:1251.00px;width:300px;text-align:right;top:849.80px;font-size:13px;line-height:13px;transform-origin:100% 0;color:#455A64;font-weight:bold;-webkit-text-stroke:0.15px currentColor;">0</div>
<div class="t" id="wiph" style="left:8.18px;top:899.34px;font-size:18.5px;line-height:18.5px;transform:scaleX(1.0667);transform-origin:0 0;color:#455A64;-webkit-text-stroke:0.45px #455A64">Work in Progress</div>
<div class="t" id="beg" style="left:9.44px;top:928.20px;font-size:13px;line-height:13px;transform:scaleX(1.0305);transform-origin:0 0;color:#455A64;">Beginning</div>
<div class="t" id="beg_v1" style="left:371.00px;width:300px;text-align:right;top:928.20px;font-size:13px;line-height:13px;transform-origin:100% 0;color:#455A64;">0</div>
<div class="t" id="beg_v2" style="left:481.00px;width:300px;text-align:right;top:928.20px;font-size:13px;line-height:13px;transform-origin:100% 0;color:#455A64;">0</div>
<div class="t" id="beg_v3" style="left:591.00px;width:300px;text-align:right;top:928.20px;font-size:13px;line-height:13px;transform-origin:100% 0;color:#455A64;">0</div>
<div class="t" id="beg_v4" style="left:701.00px;width:300px;text-align:right;top:928.20px;font-size:13px;line-height:13px;transform-origin:100% 0;color:#455A64;">0</div>
<div class="t" id="beg_v5" style="left:811.00px;width:300px;text-align:right;top:928.20px;font-size:13px;line-height:13px;transform-origin:100% 0;color:#455A64;">0</div>
<div class="t" id="beg_v6" style="left:921.00px;width:300px;text-align:right;top:928.20px;font-size:13px;line-height:13px;transform-origin:100% 0;color:#455A64;">0</div>
<div class="t" id="beg_v7" style="left:1031.00px;width:300px;text-align:right;top:928.20px;font-size:13px;line-height:13px;transform-origin:100% 0;color:#455A64;">0</div>
<div class="t" id="beg_v8" style="left:1141.00px;width:300px;text-align:right;top:928.20px;font-size:13px;line-height:13px;transform-origin:100% 0;color:#455A64;">0</div>
<div class="t" id="beg_v9" style="left:1251.00px;width:300px;text-align:right;top:928.20px;font-size:13px;line-height:13px;transform-origin:100% 0;color:#455A64;">0</div>
<div class="t" id="add" style="left:10.85px;top:961.10px;font-size:13px;line-height:13px;transform:scaleX(1.0377);transform-origin:0 0;color:#455A64;">Additions</div>
<div class="t" id="add_v0" style="left:261.00px;width:300px;text-align:right;top:961.10px;font-size:13px;line-height:13px;transform-origin:100% 0;color:#455A64;">0</div>
<div class="t" id="add_v1" style="left:371.00px;width:300px;text-align:right;top:961.10px;font-size:13px;line-height:13px;transform-origin:100% 0;color:#455A64;">0</div>
<div class="t" id="add_v2" style="left:481.00px;width:300px;text-align:right;top:961.10px;font-size:13px;line-height:13px;transform-origin:100% 0;color:#455A64;">0</div>
<div class="t" id="add_v3" style="left:591.00px;width:300px;text-align:right;top:961.10px;font-size:13px;line-height:13px;transform-origin:100% 0;color:#455A64;">0</div>
<div class="t" id="add_v4" style="left:701.00px;width:300px;text-align:right;top:961.10px;font-size:13px;line-height:13px;transform-origin:100% 0;color:#455A64;">0</div>
<div class="t" id="add_v5" style="left:811.00px;width:300px;text-align:right;top:961.10px;font-size:13px;line-height:13px;transform-origin:100% 0;color:#455A64;">0</div>
<div class="t" id="add_v6" style="left:921.00px;width:300px;text-align:right;top:961.10px;font-size:13px;line-height:13px;transform-origin:100% 0;color:#455A64;">0</div>
<div class="t" id="add_v7" style="left:1031.00px;width:300px;text-align:right;top:961.10px;font-size:13px;line-height:13px;transform-origin:100% 0;color:#455A64;">0</div>
<div class="t" id="add_v8" style="left:1141.00px;width:300px;text-align:right;top:961.10px;font-size:13px;line-height:13px;transform-origin:100% 0;color:#455A64;">0</div>
<div class="t" id="add_v9" style="left:1251.00px;width:300px;text-align:right;top:961.10px;font-size:13px;line-height:13px;transform-origin:100% 0;color:#455A64;">0</div>
<div class="t" id="caps" style="left:9.62px;top:994.00px;font-size:13px;line-height:13px;transform:scaleX(1.0353);transform-origin:0 0;color:#455A64;">Capitalizations</div>
<div class="t" id="caps_v0" style="left:261.00px;width:300px;text-align:right;top:994.00px;font-size:13px;line-height:13px;transform-origin:100% 0;color:#455A64;">0</div>
<div class="t" id="caps_v1" style="left:371.00px;width:300px;text-align:right;top:994.00px;font-size:13px;line-height:13px;transform-origin:100% 0;color:#455A64;">0</div>
<div class="t" id="caps_v2" style="left:481.00px;width:300px;text-align:right;top:994.00px;font-size:13px;line-height:13px;transform-origin:100% 0;color:#455A64;">0</div>
<div class="t" id="caps_v3" style="left:591.00px;width:300px;text-align:right;top:994.00px;font-size:13px;line-height:13px;transform-origin:100% 0;color:#455A64;">0</div>
<div class="t" id="caps_v4" style="left:701.00px;width:300px;text-align:right;top:994.00px;font-size:13px;line-height:13px;transform-origin:100% 0;color:#455A64;">0</div>
<div class="t" id="caps_v5" style="left:811.00px;width:300px;text-align:right;top:994.00px;font-size:13px;line-height:13px;transform-origin:100% 0;color:#455A64;">0</div>
<div class="t" id="caps_v6" style="left:921.00px;width:300px;text-align:right;top:994.00px;font-size:13px;line-height:13px;transform-origin:100% 0;color:#455A64;">0</div>
<div class="t" id="caps_v7" style="left:1031.00px;width:300px;text-align:right;top:994.00px;font-size:13px;line-height:13px;transform-origin:100% 0;color:#455A64;">0</div>
<div class="t" id="caps_v8" style="left:1141.00px;width:300px;text-align:right;top:994.00px;font-size:13px;line-height:13px;transform-origin:100% 0;color:#455A64;">0</div>
<div class="t" id="caps_v9" style="left:1251.00px;width:300px;text-align:right;top:994.00px;font-size:13px;line-height:13px;transform-origin:100% 0;color:#455A64;">0</div>
<div class="a" style="left:0px;top:1018px;width:1955px;height:33px;background:#CFD8DC;border-top:1px solid #78909C;border-bottom:1px solid #78909C;box-sizing:border-box"></div>
<div class="t" id="end" style="left:9.64px;top:1028.40px;font-size:13px;line-height:13px;transform:scaleX(0.9351);transform-origin:0 0;color:#455A64;font-weight:bold;-webkit-text-stroke:0.15px currentColor;">Ending</div>
<div class="t" id="end_v0" style="left:261.00px;width:300px;text-align:right;top:1028.40px;font-size:13px;line-height:13px;transform-origin:100% 0;color:#455A64;font-weight:bold;-webkit-text-stroke:0.15px currentColor;">0</div>
<div class="t" id="end_v1" style="left:371.00px;width:300px;text-align:right;top:1028.40px;font-size:13px;line-height:13px;transform-origin:100% 0;color:#455A64;font-weight:bold;-webkit-text-stroke:0.15px currentColor;">0</div>
<div class="t" id="end_v2" style="left:481.00px;width:300px;text-align:right;top:1028.40px;font-size:13px;line-height:13px;transform-origin:100% 0;color:#455A64;font-weight:bold;-webkit-text-stroke:0.15px currentColor;">0</div>
<div class="t" id="end_v3" style="left:591.00px;width:300px;text-align:right;top:1028.40px;font-size:13px;line-height:13px;transform-origin:100% 0;color:#455A64;font-weight:bold;-webkit-text-stroke:0.15px currentColor;">0</div>
<div class="t" id="end_v4" style="left:701.00px;width:300px;text-align:right;top:1028.40px;font-size:13px;line-height:13px;transform-origin:100% 0;color:#455A64;font-weight:bold;-webkit-text-stroke:0.15px currentColor;">0</div>
<div class="t" id="end_v5" style="left:811.00px;width:300px;text-align:right;top:1028.40px;font-size:13px;line-height:13px;transform-origin:100% 0;color:#455A64;font-weight:bold;-webkit-text-stroke:0.15px currentColor;">0</div>
<div class="t" id="end_v6" style="left:921.00px;width:300px;text-align:right;top:1028.40px;font-size:13px;line-height:13px;transform-origin:100% 0;color:#455A64;font-weight:bold;-webkit-text-stroke:0.15px currentColor;">0</div>
<div class="t" id="end_v7" style="left:1031.00px;width:300px;text-align:right;top:1028.40px;font-size:13px;line-height:13px;transform-origin:100% 0;color:#455A64;font-weight:bold;-webkit-text-stroke:0.15px currentColor;">0</div>
<div class="t" id="end_v8" style="left:1141.00px;width:300px;text-align:right;top:1028.40px;font-size:13px;line-height:13px;transform-origin:100% 0;color:#455A64;font-weight:bold;-webkit-text-stroke:0.15px currentColor;">0</div>
<div class="t" id="end_v9" style="left:1251.00px;width:300px;text-align:right;top:1028.40px;font-size:13px;line-height:13px;transform-origin:100% 0;color:#455A64;font-weight:bold;-webkit-text-stroke:0.15px currentColor;">0</div>
</body></html>
